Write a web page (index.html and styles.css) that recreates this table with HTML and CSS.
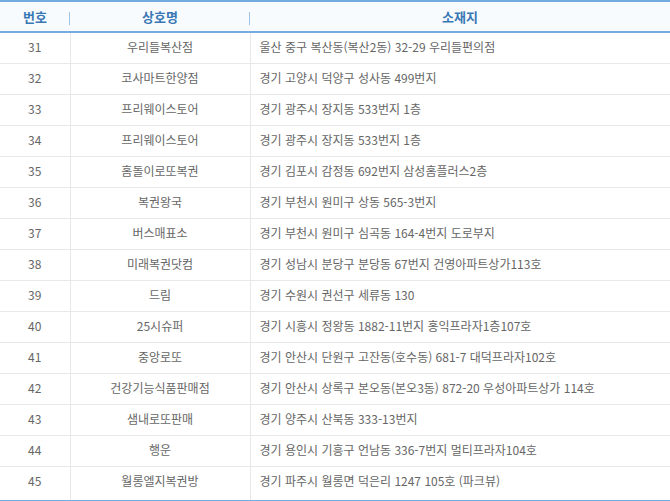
FILE: index.html
```html
<!DOCTYPE html>
<html lang="ko">
<head>
<meta charset="utf-8">
<link rel="stylesheet" href="styles.css">
</head>
<body>
<table class="list">
  <colgroup>
    <col class="c-no">
    <col class="c-name">
    <col class="c-addr">
  </colgroup>
  <thead>
    <tr>
      <th>번호</th>
      <th class="sep">상호명</th>
      <th class="sep">소재지</th>
    </tr>
  </thead>
  <tbody>
    <tr><td>31</td><td>우리들복산점</td><td class="addr">울산 중구 복산동(복산2동) 32-29 우리들편의점</td></tr>
    <tr><td>32</td><td>코사마트한양점</td><td class="addr">경기 고양시 덕양구 성사동 499번지</td></tr>
    <tr><td>33</td><td>프리웨이스토어</td><td class="addr">경기 광주시 장지동 533번지 1층</td></tr>
    <tr><td>34</td><td>프리웨이스토어</td><td class="addr">경기 광주시 장지동 533번지 1층</td></tr>
    <tr><td>35</td><td>홈돌이로또복권</td><td class="addr">경기 김포시 감정동 692번지 삼성홈플러스2층</td></tr>
    <tr><td>36</td><td>복권왕국</td><td class="addr">경기 부천시 원미구 상동 565-3번지</td></tr>
    <tr><td>37</td><td>버스매표소</td><td class="addr">경기 부천시 원미구 심곡동 164-4번지 도로부지</td></tr>
    <tr><td>38</td><td>미래복권닷컴</td><td class="addr">경기 성남시 분당구 분당동 67번지 건영아파트상가113호</td></tr>
    <tr><td>39</td><td>드림</td><td class="addr">경기 수원시 권선구 세류동 130</td></tr>
    <tr><td>40</td><td>25시슈퍼</td><td class="addr">경기 시흥시 정왕동 1882-11번지 홍익프라자1층107호</td></tr>
    <tr><td>41</td><td>중앙로또</td><td class="addr">경기 안산시 단원구 고잔동(호수동) 681-7 대덕프라자102호</td></tr>
    <tr><td>42</td><td>건강기능식품판매점</td><td class="addr">경기 안산시 상록구 본오동(본오3동) 872-20 우성아파트상가 114호</td></tr>
    <tr><td>43</td><td>샘내로또판매</td><td class="addr">경기 양주시 산북동 333-13번지</td></tr>
    <tr><td>44</td><td>행운</td><td class="addr">경기 용인시 기흥구 언남동 336-7번지 멀티프라자104호</td></tr>
    <tr><td>45</td><td>월롱엘지복권방</td><td class="addr">경기 파주시 월롱면 덕은리 1247 105호 (파크뷰)</td></tr>
  </tbody>
</table>
</body>
</html>
```
FILE: styles.css
```css
html, body {
  margin: 0;
  padding: 0;
  background: #fff;
}
body {
  font-family: "Noto Sans CJK KR", "Noto Sans", sans-serif;
  font-size: 12px;
  color: #666;
}
.list {
  width: 670px;
  border-collapse: collapse;
  table-layout: fixed;
}
.c-no { width: 70px; }
.c-name { width: 180px; }
.list thead th {
  position: relative;
  height: 29px;
  padding: 0;
  background: #f7fbfd;
  border-top: 2px solid #74acdf;
  border-bottom: 2px solid #74acdf;
  color: #3a78b5;
  font-weight: bold;
  font-size: 13px;
  text-align: center;
}
.list thead th.sep::before {
  content: "";
  position: absolute;
  left: -1px;
  top: 10px;
  width: 1px;
  height: 13px;
  background: #9ec5e8;
}
.list tbody td {
  height: 27px;
  padding: 0 0 3px;
  text-align: center;
  border-bottom: 1px solid #e8e8e8;
  border-left: 1px solid #e8e8e8;
  line-height: 1;
}
.list tbody td:first-child {
  border-left: 0;
}
.list tbody td.addr {
  text-align: left;
  padding-left: 9px;
}
.list tbody tr:last-child td {
  padding-bottom: 6px;
  border-bottom: 2px solid #74acdf;
}
```
